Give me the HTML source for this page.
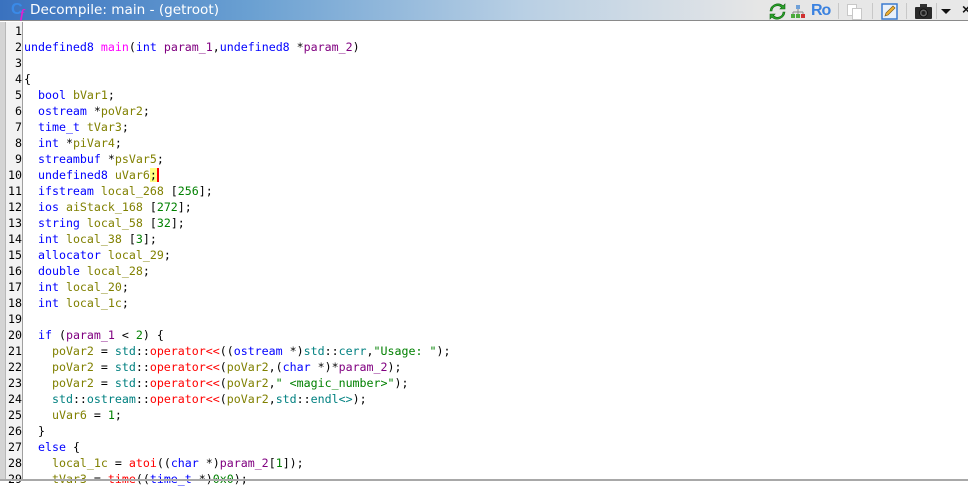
<!DOCTYPE html>
<html><head><meta charset="utf-8"><style>
*{margin:0;padding:0;box-sizing:border-box}
html,body{width:968px;height:481px;overflow:hidden;background:#fff}
#title{position:absolute;left:0;top:0;width:968px;height:21px;background:linear-gradient(to right,#3a72bf 0px,#6aa0d2 250px,#b8cfe4 520px,#e6e6e6 760px,#e8e8e8 968px);border-bottom:1px solid #8a8a8a}
#title .t{position:absolute;left:30px;top:1px;color:#fff;font:13.6px "DejaVu Sans","Liberation Sans",sans-serif;line-height:19px}
#cf{position:absolute;left:11px;top:1px;font:bold 16px "Liberation Sans",sans-serif;color:#3a8ae8}
#cf2{position:absolute;left:20px;top:6px;font:italic bold 13px "Liberation Serif",serif;color:#e020d0}
#leftstrip{position:absolute;left:0;top:22px;width:6px;height:459px;background:#d4d4d4;border-right:1px solid #b8b8b8}
#gutter{position:absolute;left:6px;top:22px;width:17px;height:457px;background:#f2f2f2;border-right:1px solid #a0a0a0}
#bottom{position:absolute;left:0;top:479px;width:968px;height:2px;background:#a8a8a8}
.code{position:absolute;top:23px;font:11.62px "DejaVu Sans Mono","Liberation Mono",monospace;line-height:16px;white-space:pre;color:#000}
#nums{left:6px;width:16px;text-align:right;color:#000}
#src{left:24px}
.k{color:#0000ff}.f{color:#ff00ff}.p{color:#800080}.v{color:#808000}.n{color:#008000}.s{color:#008000}.ns{color:#008080}.o{color:#ff0000}
.hl{background:#ffff80}
.cur{display:inline-block;width:2px;height:14px;background:#f00;vertical-align:-3px}
.ic{position:absolute;top:3px}
.sep{position:absolute;top:3px;width:1px;height:16px;background:#c8c8c8}
</style></head><body>
<div id="title"><span id="cf">C</span><span id="cf2">f</span><span class="t">Decompile: main -  (getroot)</span>
<svg class="ic" style="left:769px" width="17" height="17" viewBox="0 0 17 17"><path d="M3 8a5.5 5.5 0 0 1 9.5-3.5L11 6h5V1l-1.8 1.8A8 8 0 0 0 1 8z" fill="#2aa02a" stroke="#116611" stroke-width=".6"/><path d="M14 9a5.5 5.5 0 0 1-9.5 3.5L6 11H1v5l1.8-1.8A8 8 0 0 0 16 9z" fill="#2aa02a" stroke="#116611" stroke-width=".6"/></svg>
<svg class="ic" style="left:790px" width="16" height="16" viewBox="0 0 16 16"><rect x="6" y="2" width="4" height="4" fill="#6fa0d8"/><path d="M8 6v3M3 9h10M3 9v2M8 9v2M13 9v2" stroke="#888" fill="none"/><rect x="1" y="11" width="4" height="4" fill="#4caa3c"/><rect x="6" y="11" width="4" height="4" fill="#4caa3c"/><rect x="11" y="11" width="4" height="4" fill="#d03030"/></svg>
<span class="ic" style="left:811px;top:0;font:bold 16px 'Liberation Sans',sans-serif;color:#3b82e0;line-height:21px;letter-spacing:-1px">Ro</span>
<div class="sep" style="left:838px"></div>
<svg class="ic" style="left:846px" width="17" height="17" viewBox="0 0 17 17"><rect x="1.5" y="1.5" width="9" height="11" fill="#fff" stroke="#c8c8c8"/><rect x="6.5" y="5.5" width="9" height="11" fill="#fff" stroke="#c8c8c8"/></svg>
<div class="sep" style="left:872px"></div>
<svg class="ic" style="left:881px" width="17" height="17" viewBox="0 0 17 17"><rect x="1" y="1" width="15" height="15" fill="#e8f0fa" stroke="#3a7ad0" stroke-width="1.5"/><path d="M4 13l1-3 7-7 2 2-7 7z" fill="#f0b030" stroke="#806020" stroke-width=".7"/></svg>
<div class="sep" style="left:906px"></div>
<svg class="ic" style="left:914px" width="19" height="17" viewBox="0 0 19 17"><rect x="6" y="1" width="7" height="4" fill="#333"/><rect x="1" y="4" width="17" height="12" rx="1" fill="#2a2a2a"/><circle cx="9.5" cy="10" r="4" fill="#666" stroke="#111"/><circle cx="9.5" cy="10" r="2" fill="#222"/></svg>
<div class="sep" style="left:936px"></div>
<svg class="ic" style="left:940px;top:8px" width="12" height="7"><path d="M1 1h10L6 6z" fill="#111"/></svg>
<span class="ic" style="left:962px;top:1px;font:bold 14px 'Liberation Sans',sans-serif;color:#111">×</span>
</div>
<div id="leftstrip"></div><div id="gutter"></div>
<div class="code" id="nums">1
2
3
4
5
6
7
8
9
10
11
12
13
14
15
16
17
18
19
20
21
22
23
24
25
26
27
28
29</div>
<div class="code" id="src">
<span class="k">undefined8</span> <span class="f">main</span>(<span class="k">int</span> <span class="p">param_1</span>,<span class="k">undefined8</span> *<span class="p">param_2</span>)

{
  <span class="k">bool</span> <span class="v">bVar1</span>;
  <span class="k">ostream</span> *<span class="v">poVar2</span>;
  <span class="k">time_t</span> <span class="v">tVar3</span>;
  <span class="k">int</span> *<span class="v">piVar4</span>;
  <span class="k">streambuf</span> *<span class="v">psVar5</span>;
  <span class="k">undefined8</span> <span class="v">uVar6</span><span class="hl">;</span><span class="cur"></span>
  <span class="k">ifstream</span> <span class="v">local_268</span> [<span class="n">256</span>];
  <span class="k">ios</span> <span class="v">aiStack_168</span> [<span class="n">272</span>];
  <span class="k">string</span> <span class="v">local_58</span> [<span class="n">32</span>];
  <span class="k">int</span> <span class="v">local_38</span> [<span class="n">3</span>];
  <span class="k">allocator</span> <span class="v">local_29</span>;
  <span class="k">double</span> <span class="v">local_28</span>;
  <span class="k">int</span> <span class="v">local_20</span>;
  <span class="k">int</span> <span class="v">local_1c</span>;

  <span class="k">if</span> (<span class="p">param_1</span> &lt; <span class="n">2</span>) {
    <span class="v">poVar2</span> = <span class="ns">std</span>::<span class="o">operator&lt;&lt;</span>((<span class="k">ostream</span> *)<span class="ns">std</span>::<span class="ns">cerr</span>,<span class="s">"Usage: "</span>);
    <span class="v">poVar2</span> = <span class="ns">std</span>::<span class="o">operator&lt;&lt;</span>(<span class="v">poVar2</span>,(<span class="k">char</span> *)*<span class="p">param_2</span>);
    <span class="v">poVar2</span> = <span class="ns">std</span>::<span class="o">operator&lt;&lt;</span>(<span class="v">poVar2</span>,<span class="s">" &lt;magic_number&gt;"</span>);
    <span class="ns">std</span>::<span class="ns">ostream</span>::<span class="o">operator&lt;&lt;</span>(<span class="v">poVar2</span>,<span class="ns">std</span>::<span class="ns">endl&lt;&gt;</span>);
    <span class="v">uVar6</span> = <span class="n">1</span>;
  }
  <span class="k">else</span> {
    <span class="v">local_1c</span> = <span class="o">atoi</span>((<span class="k">char</span> *)<span class="p">param_2</span>[<span class="n">1</span>]);
    <span class="v">tVar3</span> = <span class="o">time</span>((<span class="k">time_t</span> *)<span class="n">0x0</span>);</div>
<div id="bottom"></div>
</body></html>
